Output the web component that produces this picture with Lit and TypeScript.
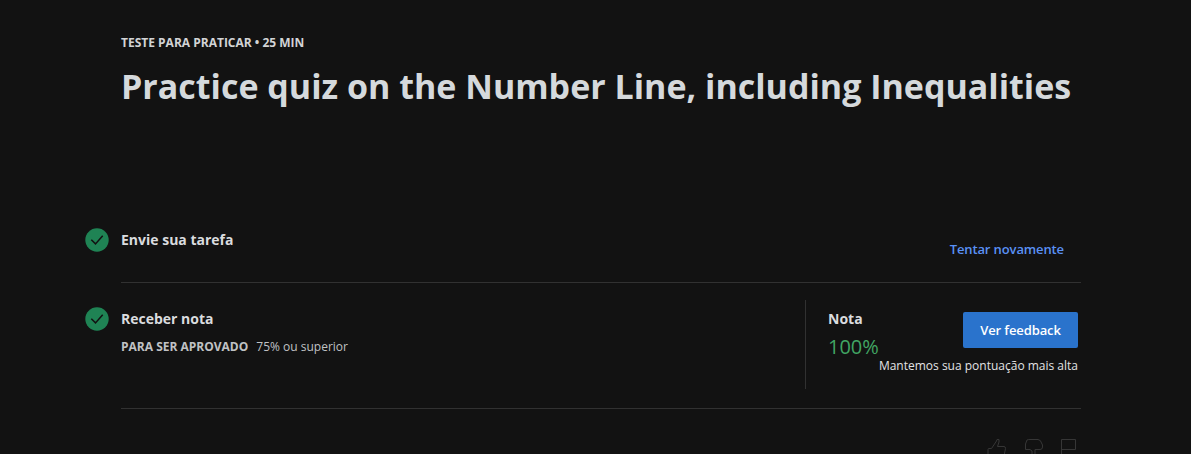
import { LitElement, html, css, svg } from "lit";
import { customElement } from "lit/decorators.js";

@customElement("app-root")
export class AppRoot extends LitElement {
  static styles = css`
    :host { display: block; box-sizing: border-box; width: 1191px; height: 454px; overflow: hidden; background: #121212; color: #dadcdf; font-family: "Open Sans", sans-serif; padding: 34px 110px 0 85px; }
    .head { padding-left: 36px; height: 190px; box-sizing: border-box; }
    .kicker { font-size: 12px; font-weight: 700; line-height: 18px; color: #d2d4d6; white-space: nowrap; }
    h1 { margin: 10px 0 0; font-size: 34px; line-height: 48px; font-weight: 700; white-space: nowrap; color: #d5d9dc; }
    .row { display: flex; }
    .mark { width: 36px; flex: none; }
    .mark svg { display: block; margin-top: 4px; }
    .body { width: 960px; box-sizing: border-box; display: flex; justify-content: space-between; border-bottom: 1px solid #313131; }
    .first .body { height: 59px; }
    .second { padding-top: 17px; }
    .second .mark { padding-top: 3px; }
    .second .body { height: 109px; }
    .title { font-size: 14px; font-weight: 700; line-height: 20px; }
    .first .title { margin-top: 6px; }
    .second .title { margin-top: 9px; }
    .retry { font-size: 13px; font-weight: 600; letter-spacing: -0.12px; line-height: 20px; color: #5a91f5; margin: 15px 17px 0 0; white-space: nowrap; }
    .pass { display: flex; gap: 8px; font-size: 12px; line-height: 18px; margin-top: 9px; color: #c0c2c4; }
    .grade { display: flex; width: 276px; height: 89px; box-sizing: border-box; border-left: 1px solid #313131; padding-left: 22px; }
    .score { font-size: 20px; line-height: 26px; margin-top: 5px; color: #41a563; }
    .value { width: 51px; flex: none; }
    .side { display: flex; flex-direction: column; align-items: flex-end; width: 199px; padding-top: 12px; }
    button { width: 115px; height: 36px; border: 0; border-radius: 2px; padding: 0; background: #2a73cc; color: #fff; font: 600 13px/36px "Open Sans", sans-serif; letter-spacing: -0.12px; }
    .note { font-size: 12px; line-height: 18px; margin-top: 9px; white-space: nowrap; color: #e2e3e4; }
    .tools { display: flex; gap: 17px; padding: 29px 0 0 902px; }
    .tools svg { display: block; }
    .tools svg:last-child { margin-left: -2px; }
  `;
  private check() {
    return html`<svg width="24" height="24" viewBox="0 0 24 24"><circle cx="12" cy="12" r="11.7" fill="#1f8354"/><path d="M6.3 11.7l4.2 4.2 7.2-8.1" fill="none" stroke="#121212" stroke-width="1.5"/></svg>`;
  }
  private icon(d: string) {
    return html`<svg width="20" height="20" viewBox="0 0 20 20" fill="none" stroke="#363636" stroke-width="1">${svg`<path d=${d}></path>`}</svg>`;
  }
  render() {
    return html`
      <header class="head"><div class="kicker">TESTE PARA PRATICAR • 25 MIN</div><h1>Practice quiz on the Number Line, including Inequalities</h1></header>
      <section class="row first"><div class="mark">${this.check()}</div><div class="body"><div class="title">Envie sua tarefa</div><div class="retry">Tentar novamente</div></div></section>
      <section class="row second"><div class="mark">${this.check()}</div><div class="body">
        <div><div class="title">Receber nota</div><div class="pass"><b>PARA SER APROVADO</b><span>75% ou superior</span></div></div>
        <div class="grade"><div class="value"><div class="title">Nota</div><div class="score">100%</div></div><div class="side"><button>Ver feedback</button><div class="note">Mantemos sua pontuação mais alta</div></div></div>
      </div></section>
      <footer class="tools">
        ${this.icon("M1 18V11.5Q1 10.5 2 10.5H4.5L9.5 3L10 1.5H12V4L10.5 8.5H17Q18.5 8.5 18.5 10.5L17 18H6L4.5 17H1Z")}
        ${this.icon("M3 2Q4 1.5 6 1.5H14Q17 2 17.5 5L18.5 7V9Q18.5 11.5 16 11.5H11V16Q11 18 9.5 18T8 16V13L6 11.5H1.5V6Z")}
        ${this.icon("M2.5 20V1.5H16.5V11.5H2.5")}
      </footer>`;
  }
}
